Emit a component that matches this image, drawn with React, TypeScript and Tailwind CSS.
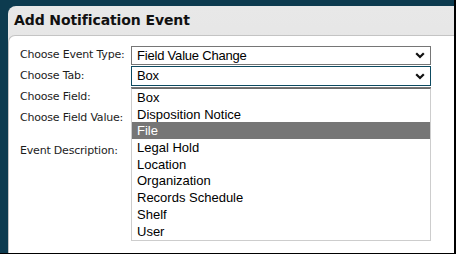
import { useState } from "react";

const tabs = [
  "Box",
  "Disposition Notice",
  "File",
  "Legal Hold",
  "Location",
  "Organization",
  "Records Schedule",
  "Shelf",
  "User",
];

function Chevron() {
  return (
    <svg width="10" height="7" viewBox="0 0 10 7" className="shrink-0">
      <polyline
        points="1.2,1.2 5,5 8.8,1.2"
        fill="none"
        stroke="#111"
        strokeWidth="2.2"
      />
    </svg>
  );
}

function FakeSelect({
  value,
  focused,
}: {
  value: string;
  focused?: boolean;
}) {
  return (
    <div
      className={
        "h-full w-full bg-white border flex items-center justify-between pl-[5px] pr-[5px] text-[13px] text-black font-['Liberation_Sans',Arial,sans-serif] " +
        (focused ? "border-[#0d4a60]" : "border-[#767676]")
      }
    >
      <span>{value}</span>
      <Chevron />
    </div>
  );
}

export default function App() {
  const [hovered] = useState("File");

  return (
    <div className="w-[456px] h-[254px] bg-[#0d3b4f] border-r-2 border-b border-black flex flex-col pt-[6px] pl-[8px] overflow-hidden">
      {/* PANEL */}
      <div className="flex-1 flex flex-col rounded-tl-[8px] bg-[linear-gradient(#e8e8e8_0%,#e2e2e2_55%,#b5b5b5_90%,#9a9a9a_100%)]">
        {/* HEADER */}
        <div className="h-[29px] pl-[6px] pt-[6px] font-['DejaVu_Sans',Verdana,sans-serif] font-bold text-[14px] leading-[17px] text-[#111] tracking-[-0.1px]">
          Add Notification Event
        </div>

        {/* BODY */}
        <div className="flex-1 bg-white rounded-tl-[7px] border-l border-t border-[#c4c4c4] pt-[10px] pl-[11px] font-['DejaVu_Sans',Verdana,sans-serif] text-[11px] text-[#1c1c1c] tracking-[-0.2px]">
          <div className="flex items-center h-[19px]">
            <div className="w-[111px]">Choose Event Type:</div>
            <div className="w-[300px] h-full">
              <FakeSelect value="Field Value Change" />
            </div>
          </div>

          <div className="flex items-center h-[20px] mt-[1px]">
            <div className="w-[111px]">Choose Tab:</div>
            <div className="w-[300px] h-full relative">
              <FakeSelect value="Box" focused />

              {/* OPEN LIST */}
              <div className="absolute left-0 top-[22px] w-[300px] z-10 bg-white border border-[#cdcdcd] border-t-[#6a6a6a] pb-[1px] font-['Liberation_Sans',Arial,sans-serif] text-[13px] text-black tracking-normal">
                {tabs.map((t) => (
                  <div
                    key={t}
                    className={
                      t === hovered
                        ? "h-[16.7px] leading-[17px] pl-[5px] bg-[#767676] text-white"
                        : "h-[16.7px] leading-[17px] pl-[5px]"
                    }
                  >
                    {t}
                  </div>
                ))}
              </div>
            </div>
          </div>

          <div className="flex items-center h-[20px] mt-[1px]">
            <div className="w-[111px]">Choose Field:</div>
            <div className="w-[300px] h-full">
              <FakeSelect value="" />
            </div>
          </div>

          <div className="flex items-center h-[20px] mt-[1px]">
            <div className="w-[111px]">Choose Field Value:</div>
            <div className="w-[300px] h-full">
              <FakeSelect value="" />
            </div>
          </div>

          <div className="flex items-start mt-[15px]">
            <div className="w-[111px]">Event Description:</div>
            <div className="w-[300px] h-[60px] border border-[#767676]" />
          </div>
        </div>
      </div>
    </div>
  );
}
